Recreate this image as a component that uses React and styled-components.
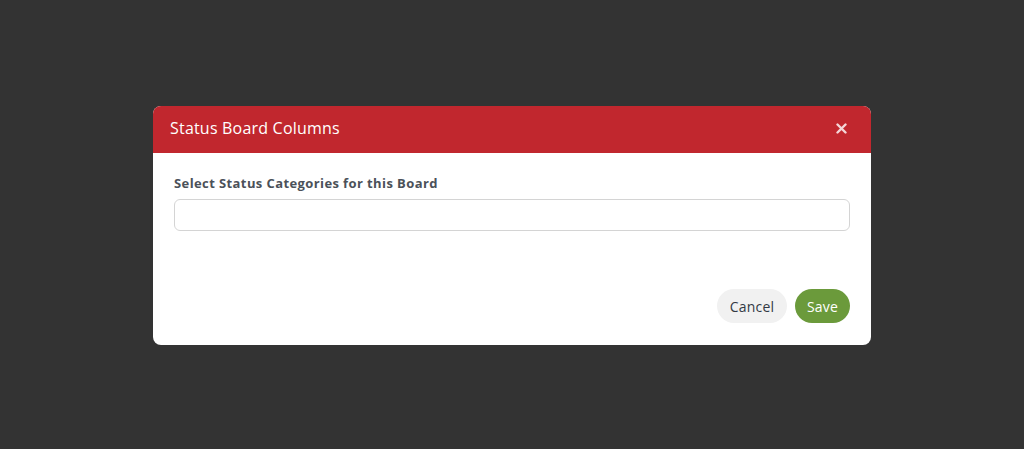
import React from 'react';
import styled, { createGlobalStyle } from 'styled-components';

const GlobalStyle = createGlobalStyle`
  html, body {
    margin: 0;
    padding: 0;
    background: #333333;
    font-family: 'Open Sans', 'DejaVu Sans', sans-serif;
  }
  * {
    box-sizing: border-box;
  }
`;

const Overlay = styled.div`
  display: flex;
  align-items: flex-start;
  justify-content: center;
  min-height: 100vh;
  padding-top: 106px;
`;

const Dialog = styled.div`
  width: 718px;
  height: 239px;
  background: #ffffff;
  border-radius: 8px;
  overflow: hidden;
  display: flex;
  flex-direction: column;
`;

const Header = styled.div`
  height: 47px;
  background: #c1272e;
  display: flex;
  align-items: center;
  justify-content: space-between;
  padding: 0 23px 3px 17px;
`;

const Title = styled.h2`
  margin: 0;
  font-size: 16px;
  font-weight: 400;
  letter-spacing: 0.2px;
  color: #ffffff;
`;

const CloseButton = styled.button`
  border: 0;
  background: transparent;
  padding: 0;
  width: 14px;
  height: 14px;
  display: flex;
  align-items: center;
  justify-content: center;
  cursor: pointer;
`;

const Body = styled.div`
  flex: 1;
  display: flex;
  flex-direction: column;
  padding: 22px 21px 22px 21px;
`;

const Label = styled.label`
  font-size: 13px;
  font-weight: 700;
  letter-spacing: 0.4px;
  color: #4b5159;
  line-height: 17px;
  margin-bottom: 7px;
`;

const Input = styled.input`
  height: 32px;
  width: 100%;
  border: 1px solid #d4d4d4;
  border-radius: 6px;
  outline: none;
  padding: 0 10px;
  font: inherit;
`;

const Footer = styled.div`
  margin-top: auto;
  display: flex;
  justify-content: flex-end;
  gap: 8px;
`;

const Button = styled.button`
  height: 34px;
  min-width: ${({ $primary }) => ($primary ? '55px' : '70px')};
  border: 0;
  border-radius: 17px;
  padding: 0 11px;
  font-family: inherit;
  font-size: 14px;
  letter-spacing: 0.2px;
  cursor: pointer;
  background: ${({ $primary }) => ($primary ? '#6b9a3b' : '#f1f1f1')};
  color: ${({ $primary }) => ($primary ? '#ffffff' : '#333a44')};
`;

export default function App() {
  return (
    <>
      <GlobalStyle />
      <Overlay>
        <Dialog>
          <Header>
            <Title>Status Board Columns</Title>
            <CloseButton aria-label="Close">
              <svg width="11" height="11" viewBox="0 0 11 11">
                <path
                  d="M1.5 1.5 L9.5 9.5 M9.5 1.5 L1.5 9.5"
                  stroke="#f4d6d8"
                  strokeWidth="2.4"
                  strokeLinecap="round"
                />
              </svg>
            </CloseButton>
          </Header>
          <Body>
            <Label>Select Status Categories for this Board</Label>
            <Input />
            <Footer>
              <Button>Cancel</Button>
              <Button $primary>Save</Button>
            </Footer>
          </Body>
        </Dialog>
      </Overlay>
    </>
  );
}
